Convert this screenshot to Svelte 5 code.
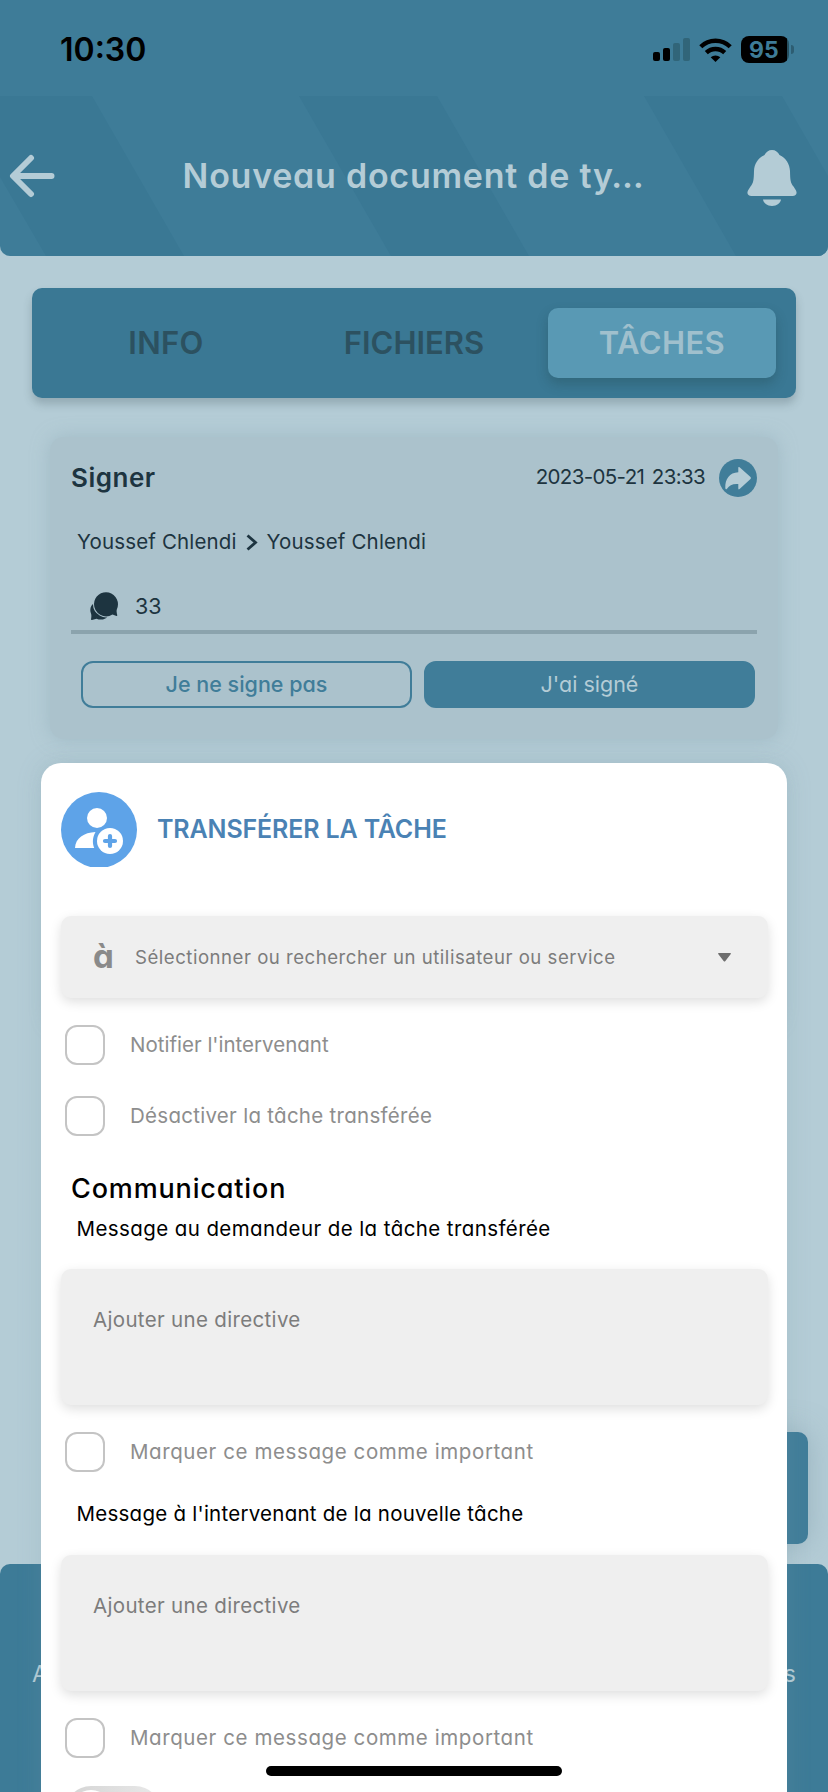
<script>
  const tabs = [
    { label: 'INFO', cls: 'info' },
    { label: 'FICHIERS', cls: 'files' },
    { label: 'TÂCHES', cls: 'tasks', active: true }
  ];
  const options = [
    { label: "Notifier l'intervenant", cls: 'notify' },
    { label: 'Désactiver la tâche transférée', cls: 'disable' }
  ];
  const messages = [
    { label: 'Message au demandeur de la tâche transférée', cls: 'requester' },
    { label: "Message à l'intervenant de la nouvelle tâche", cls: 'assignee' }
  ];
</script>

<div class="screen">
  <header>
    <svg class="stripes" viewBox="0 0 828 160" aria-hidden="true">
      <path d="M0 0H92L184 160H46L0 81ZM299 0H437L529 160H391ZM644 0H782L828 80V160H736Z" />
    </svg>
    <div class="status">
      <span class="time">10:30</span>
      <div class="indicators">
        <svg width="37" height="23" viewBox="0 0 37 23">
          <rect x="0" y="14" width="7" height="9" rx="2" />
          <rect x="10" y="10" width="7" height="13" rx="2" />
          <g fill="#316579">
            <rect x="20" y="5" width="7" height="18" rx="2" />
            <rect x="30" y="0" width="7" height="23" rx="2" />
          </g>
        </svg>
        <svg class="wifi" width="33" height="24" viewBox="0 0 33 24">
          <g fill="none" stroke="#000" stroke-width="4.4">
            <path d="M1.800 8.800A21 21 0 0 1 31.200 8.800" />
            <path d="M7.300 14.700A13.200 13.200 0 0 1 25.700 14.700" />
          </g>
          <path d="M16.500 24L11.700 19.300A7 7 0 0 1 21.300 19.300Z" />
        </svg>
        <div class="battery"><span>95</span></div>
        <i class="nub"></i>
      </div>
    </div>
    <div class="titlebar">
      <svg class="back" width="46" height="44" viewBox="0 0 46 44">
        <path d="M42.500 22H5M22 4L4 22L22 40" fill="none" stroke="#b4ccd6" stroke-width="6" stroke-linecap="round" stroke-linejoin="round" />
      </svg>
      <h1>Nouveau document de ty…</h1>
      <svg class="bell" width="50" height="57" viewBox="0 0 50 57" fill="#b4ccd6">
        <path d="M25 0C21.500 0 19 2 17.500 5C11 8 7.300 14 7 21C6.800 30 6.500 33 3.500 36.500L1 40.500C-.5 43.500 1 46 4.500 46H45.500C49 46 50.500 43.500 49 40.500L46.500 36.500C43.500 33 43.200 30 43 21C42.700 14 39 8 32.500 5C31 2 28.500 0 25 0Z" />
        <path d="M16 49.500H34C33.500 53 30 56 25 56S16.500 53 16 49.500Z" />
      </svg>
    </div>
  </header>

  <main>
    <nav class="tabs">
      {#each tabs as tab}
        <span class="tab {tab.cls}" class:active={tab.active}>{tab.label}</span>
      {/each}
    </nav>

    <article class="card">
      <div class="card-head">
        <h2>Signer</h2>
        <time>2023-05-21 23:33</time>
        <svg width="38" height="38" viewBox="0 0 38 38">
          <circle cx="19" cy="19" r="19" fill="#407d99" />
          <path d="M19.300 8.700Q19.300 7.300 20.600 8.300L31.500 18Q32.400 19 31.500 20L20.600 30Q19.300 31 19.300 29.600V25C13.500 24.600 10.500 26 8 29.700Q6.600 31 6.300 29C6 20 10.500 13.700 19.300 13.300Z" fill="#b4ccd6" />
        </svg>
      </div>
      <div class="people">
        <span>Youssef Chlendi</span>
        <svg width="12" height="17" viewBox="0 0 12 17">
          <path d="M1.500 1.500L9.500 8.500L1.500 15.500" fill="none" stroke="#1d3440" stroke-width="2.800" />
        </svg>
        <span>Youssef Chlendi</span>
      </div>
      <div class="comments">
        <svg width="29" height="29" viewBox="0 0 29 29" fill="#1d3440">
          <path d="M5 10.500C.5 13-.6 17.500 1 21.500C1.700 23.500 1.300 25.500 1 27.200Q1 28.200 2 28L6.500 26.700C10 28.200 15.500 28 17.500 24.500Z" />
          <path d="M4 12A12 12 0 1 1 26.800 17.500C26.300 19.500 26.800 21.500 27.300 23.300Q27.300 24 26.500 23.900L22.500 22.500A12.200 12.200 0 0 1 4 12Z" stroke="#abc2cc" stroke-width="2" paint-order="stroke" />
        </svg>
        <span>33</span>
      </div>
      <div class="actions">
        <button class="refuse">Je ne signe pas</button>
        <button class="accept">J'ai signé</button>
      </div>
    </article>
    <article class="card next"></article>
  </main>

  <div class="fab"></div>
  <footer><span class="first">A</span><span class="last">s</span></footer>

  <section class="sheet">
    <div class="sheet-head">
      <svg width="76" height="75" viewBox="0 0 76 75">
        <circle cx="38" cy="38" r="38" fill="#5ea3e8" />
        <g fill="#fff">
          <circle cx="36" cy="26" r="10" />
          <path d="M14 56C14.500 46 23 40.500 34.500 40C31.500 45 31.200 51 33.200 56Z" />
          <circle cx="49" cy="49" r="13" />
        </g>
        <path d="M49 44V54M44 49H54" stroke="#5ea3e8" stroke-width="4.200" stroke-linecap="round" />
      </svg>
      <h2>TRANSFÉRER LA TÂCHE</h2>
    </div>

    <div class="select">
      <b>à</b>
      <span>Sélectionner ou rechercher un utilisateur ou service</span>
      <svg width="13" height="9" viewBox="0 0 13 9"><path d="M.6 0H12.400Q13.300.3 12.600 1.200L7.400 8Q6.500 9 5.600 8L.4 1.200Q-.3.300.6 0Z" fill="#6e6e6e" /></svg>
    </div>

    {#each options as option}
      <label class="check {option.cls}"><i></i><span>{option.label}</span></label>
    {/each}

    <h3>Communication</h3>
    {#each messages as message}
      <p class={message.cls}>{message.label}</p>
      <div class="area">Ajouter une directive</div>
      <label class="check important"><i></i><span>Marquer ce message comme important</span></label>
    {/each}
    <div class="toggle"><i></i></div>
  </section>

  <div class="home"></div>
</div>

<style>
  :global(body) { margin: 0; }
  .screen {
    position: relative;
    width: 828px;
    height: 1792px;
    overflow: hidden;
    background: #b4ccd6;
    font-family: Inter, sans-serif;
    font-feature-settings: "cv11";
    color: #1d3440;
    white-space: nowrap;
  }
  h1, h2, h3, p { margin: 0; }
  svg { display: block; flex: none; }

  header {
    position: relative;
    height: 256px;
    background: #3e7c98;
    border-radius: 0 0 10px 10px;
    overflow: hidden;
  }
  .stripes { position: absolute; left: 0; top: 96px; width: 828px; height: 160px; fill: #3a7894; }
  .status {
    display: flex;
    justify-content: space-between;
    align-items: center;
    box-sizing: border-box;
    height: 96px;
    padding: 3px 34px 0 60px;
    color: #000;
  }
  .time { font-size: 32px; font-weight: 600; line-height: 40px; }
  .indicators { display: flex; align-items: center; }
  .wifi { margin: 0 9px 0 9px; }
  .battery {
    display: flex;
    align-items: center;
    justify-content: center;
    width: 48px;
    height: 27px;
    border-radius: 8px;
    background: linear-gradient(to right, #000 46px, #275060 46px);
    color: #3e7c98;
    font-size: 23px;
    font-weight: 700;
    letter-spacing: .3px;
  }
  .battery span { padding-right: 2px; }
  .nub { width: 3px; height: 9px; margin-left: 2px; border-radius: 0 3px 3px 0; background: #2d5d72; }

  .titlebar {
    position: relative;
    display: flex;
    align-items: center;
    justify-content: space-between;
    height: 160px;
    padding: 0 31px 0 9px;
  }
  .back { margin-top: -1px; }
  .bell { margin-top: 4px; }
  h1 { margin-left: 25px; padding-bottom: 2px; font-size: 34px; font-weight: 600; letter-spacing: .75px; color: #b4ccd6; }

  main { padding: 32px 32px 0; }
  .tabs {
    display: grid;
    grid-template-columns: repeat(3, 1fr);
    gap: 20px;
    height: 70px;
    padding: 20px;
    border-radius: 10px;
    background: #3a7894;
    box-shadow: 0 6px 8px rgba(50, 70, 80, .25);
  }
  .tab {
    display: flex;
    align-items: center;
    justify-content: center;
    box-sizing: border-box;
    padding-bottom: 2px;
    border-radius: 10px;
    font-size: 31px;
    font-weight: 600;
    color: #2c5160;
  }
  .info { letter-spacing: .31px; }
  .tasks { letter-spacing: .4px; }
  .active { background: #5999b4; color: #a0c0cd; box-shadow: 0 6px 12px rgba(30, 60, 60, .28); }

  .card {
    margin: 39px 18px 0;
    padding: 22px 21px 31px;
    border-radius: 14px;
    background: #abc2cc;
    box-shadow: 0 0 18px rgba(150, 177, 188, .66);
  }
  .card.next { height: 200px; margin-top: 33px; }
  .card-head { display: flex; align-items: center; height: 38px; }
  .card-head h2 { flex: 1; padding-bottom: 2px; font-size: 26px; font-weight: 600; letter-spacing: .5px; }
  time { margin-right: 14px; padding-bottom: 3px; font-size: 20.500px; letter-spacing: -.65px; word-spacing: 2.500px; }
  .people {
    display: flex;
    align-items: center;
    height: 30px;
    margin-top: 30px;
    padding-left: 6px;
    font-size: 20.500px;
    letter-spacing: .15px;
  }
  .people span { padding-bottom: 2px; }
  .people svg { margin: 0 9px; }
  .comments {
    display: flex;
    align-items: center;
    gap: 16px;
    height: 28px;
    margin-top: 35px;
    padding: 0 0 10px 19px;
    border-bottom: 4px solid #8ba3ad;
    font-size: 21.500px;
  }
  .actions { display: flex; gap: 12px; margin: 27px 2px 0 10px; }
  button {
    flex: 1;
    height: 47px;
    padding: 0 0 2px;
    border: 2px solid #407d99;
    border-radius: 12px;
    background: none;
    font: inherit;
    font-size: 21.500px;
    color: #407d99;
  }
  .refuse { font-weight: 500; }
  .accept { background: #407d99; color: #b4ccd6; }

  .fab {
    position: absolute;
    right: 20px;
    top: 1432px;
    width: 112px;
    height: 112px;
    border-radius: 10px;
    background: #407d99;
    box-shadow: 0 0 28px rgba(125, 155, 168, .5);
  }
  footer {
    position: absolute;
    left: 0;
    bottom: 0;
    display: flex;
    justify-content: space-between;
    box-sizing: border-box;
    width: 828px;
    height: 228px;
    padding: 97px 32px 0 32px;
    border-radius: 10px 10px 0 0;
    background: #3d7b97;
    font-size: 23px;
    line-height: 26px;
    color: #b4ccd6;
  }

  .sheet {
    position: absolute;
    left: 41px;
    top: 763px;
    box-sizing: border-box;
    width: 746px;
    height: 1100px;
    padding: 29px 19px 0 20px;
    border-radius: 20px 20px 0 0;
    background: #fff;
    color: #000;
    box-shadow: 0 0 24px rgba(125, 155, 168, .22);
  }
  .sheet-head { display: flex; align-items: center; gap: 20px; }
  .sheet-head h2 { padding-bottom: 1px; font-size: 25px; font-weight: 600; letter-spacing: -.15px; color: #4a82b4; }
  .select, .area {
    border-radius: 10px;
    background: #efefef;
    box-shadow: 0 4px 12px rgba(0, 0, 0, .13);
    color: #7c7c7c;
  }
  .select { display: flex; align-items: center; height: 82px; margin-top: 49px; padding: 0 37px 0 32px; }
  .select b { width: 42px; padding-bottom: 2px; font-size: 33px; font-weight: 700; color: #8a8a8a; }
  .select span { flex: 1; font-feature-settings: normal; font-size: 18.600px; letter-spacing: .51px; }
  .check { display: flex; align-items: center; gap: 25px; height: 40px; margin-top: 27px; padding-left: 4px; }
  .check i { box-sizing: border-box; width: 40px; height: 40px; border: 2px solid #c4c4c4; border-radius: 12px; }
  .check span { padding-bottom: 2px; font-size: 20.500px; color: #8d8d8d; }
  .disable { margin-top: 31px; }
  .disable span { letter-spacing: .28px; }
  .important span { letter-spacing: .59px; }
  h3 { margin: 36px 0 0 10px; font-size: 27px; line-height: 34px; font-weight: 500; letter-spacing: .85px; }
  p { margin: 8px 0 0 15.500px; font-size: 20.500px; line-height: 30px; letter-spacing: .41px; }
  .assignee { margin-top: 27px; letter-spacing: .25px; }
  .area {
    box-sizing: border-box;
    height: 136px;
    margin-top: 25px;
    padding: 36px 32px;
    font-size: 20.500px;
    line-height: 30px;
    letter-spacing: .33px;
  }
  .assignee + .area { margin-top: 26px; }
  .toggle {
    display: flex;
    box-sizing: border-box;
    width: 96px;
    height: 52px;
    margin: 28px 0 0 4px;
    padding: 4px;
    border-radius: 26px;
    background: linear-gradient(to right, #d4d4d4, #e9e9e9);
  }
  .toggle i { width: 44px; height: 44px; border-radius: 50%; background: #fff; }

  .home { position: absolute; left: 266px; top: 1766px; width: 296px; height: 10px; border-radius: 5px; background: #000; }
</style>
